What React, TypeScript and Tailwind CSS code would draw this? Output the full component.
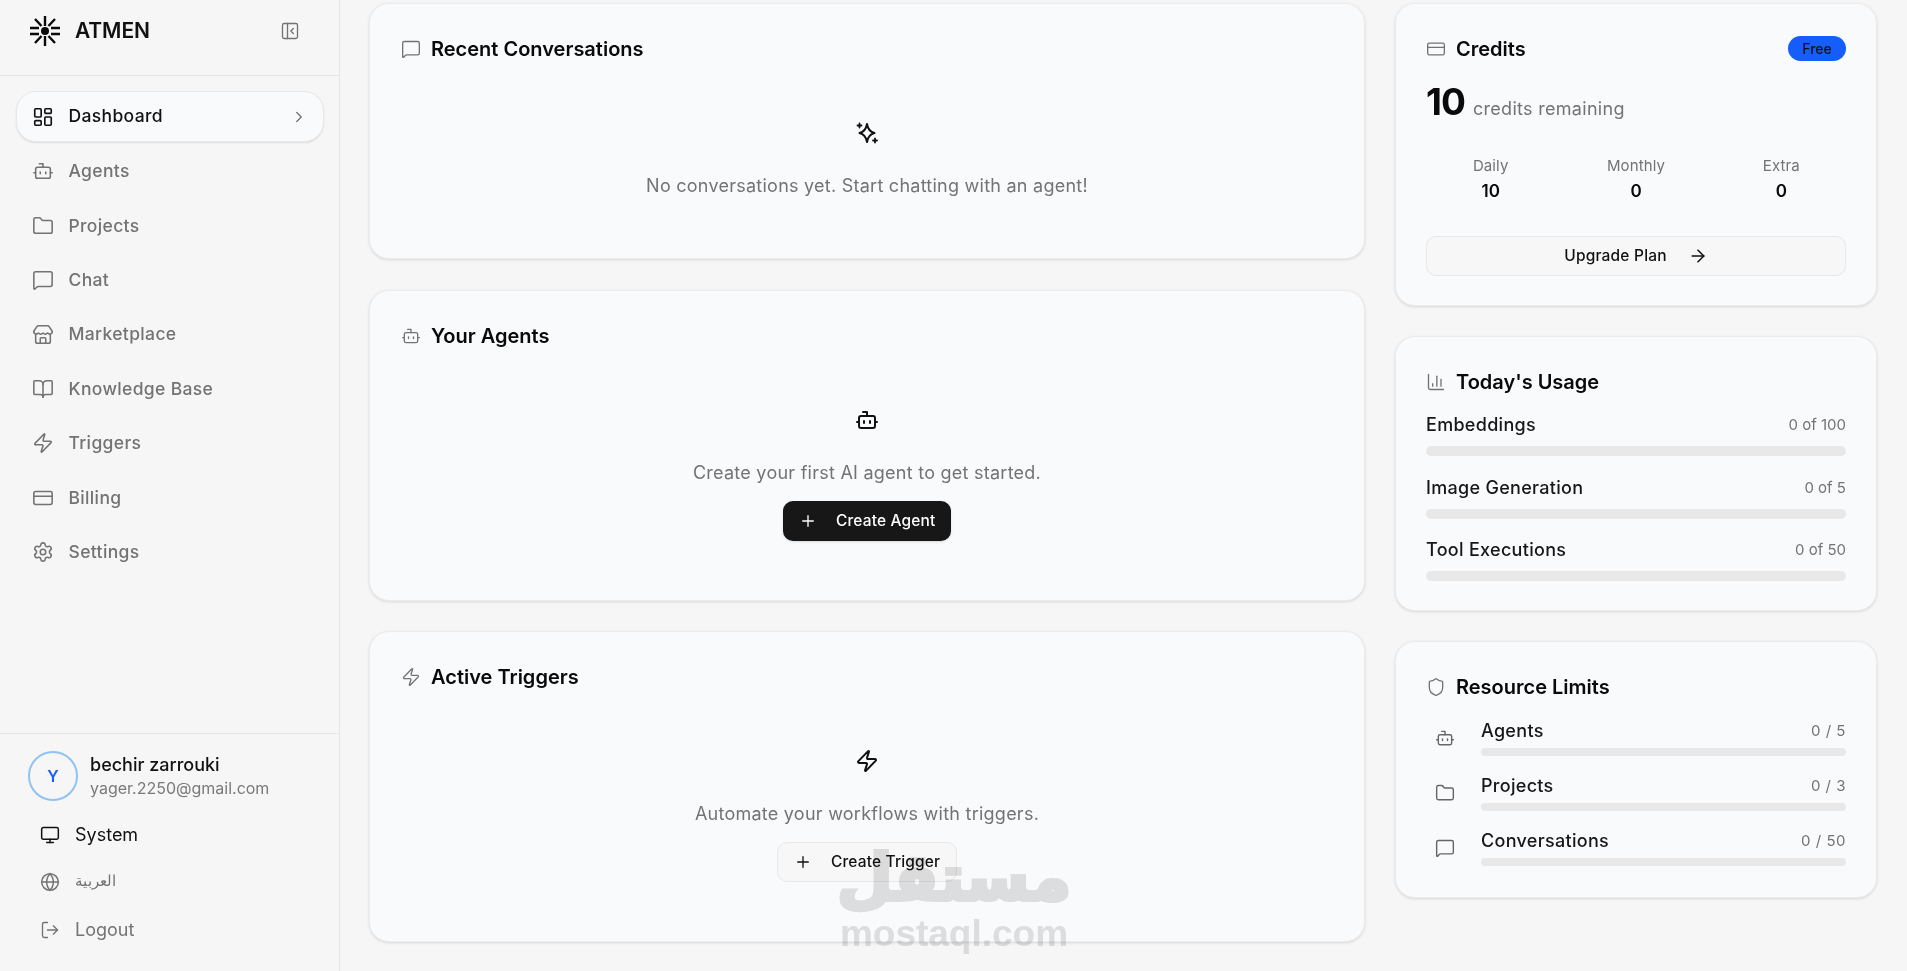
import { ArrowRight, BookOpen, Bot, ChartColumn, ChevronRight, CreditCard, Folder, Globe, LayoutDashboard, LogOut, MessageSquare, Monitor, PanelLeftClose, Plus, Settings, Shield, Store, Zap } from "lucide-react";
import type { ReactNode } from "react";

const nav = [
  { label: "Agents", icon: Bot },
  { label: "Projects", icon: Folder },
  { label: "Chat", icon: MessageSquare },
  { label: "Marketplace", icon: Store },
  { label: "Knowledge Base", icon: BookOpen },
  { label: "Triggers", icon: Zap },
  { label: "Billing", icon: CreditCard },
  { label: "Settings", icon: Settings },
];

function Logo() {
  return (
    <svg width="30" height="30" viewBox="0 0 30 30" className="text-[#0b0b0b]" fill="none" stroke="currentColor" strokeWidth="2.4">
      <circle cx="15" cy="15" r="4" fill="currentColor" stroke="none" />
      <path d="M0 12h9M21 12h9M0 18h9M21 18h9" strokeWidth="2.600" />
      <path d="M15 0v10M15 20v10" />
      <path d="M5 3l6.500 7M25 3l-6.500 7M5 27l6.500-7M25 27l-6.500-7" />
    </svg>
  );
}

function Spark() {
  return (
    <svg width="24" height="24" viewBox="0 0 24 24" fill="none" stroke="currentColor" strokeWidth="2" strokeLinejoin="round" strokeLinecap="round">
      <path d="M12 3C12.800 7.800 14.500 10.800 19.500 12C14.500 13.200 12.800 16.200 12 21C11.200 16.200 9.500 13.200 4.500 12C9.500 10.800 11.200 7.800 12 3Z" />
      <path d="M4.500 2.500v4M2.500 4.500h4M20 17.500v4M18 19.500h4" strokeWidth="1.800" />
    </svg>
  );
}

function Card({ className, children }: { className: string; children: ReactNode }) {
  return <section className={`rounded-[20px] border border-[#ececec] bg-[#f9fafc] shadow-[0_1px_3px_rgba(0,0,0,0.12)] ${className}`}>{children}</section>;
}

function Heading({ icon: Icon, children }: { icon: typeof Bot; children: ReactNode }) {
  return (
    <h2 className="flex items-center gap-[10px] text-[20px] leading-7 font-semibold text-[#0a0a0a]">
      <Icon className="size-[20px] text-[#737373]" strokeWidth={1.6} />
      {children}
    </h2>
  );
}

function Meter({ label, value }: { label: string; value: string }) {
  return (
    <div>
      <div className="flex items-center justify-between">
        <span className="text-[18px] leading-6 font-medium tracking-[0.3px] text-[#171717]">{label}</span>
        <span className="text-[15px] leading-6 text-[#737373]">{value}</span>
      </div>
      <div className="mt-[9px] h-[10px] rounded-full bg-[#e8e8e8]" />
    </div>
  );
}

function Limit({ icon: Icon, label, value }: { icon: typeof Bot; label: string; value: string }) {
  return (
    <div className="flex items-center">
      <div className="flex w-[55px] shrink-0 justify-start pl-[9px]">
        <Icon className="size-[20px] text-[#666]" strokeWidth={1.7} />
      </div>
      <div className="flex-1">
        <div className="flex items-center justify-between">
          <span className="text-[18px] leading-6 font-medium tracking-[0.3px] text-[#171717]">{label}</span>
          <span className="text-[15px] leading-6 tracking-[0.5px] text-[#737373]">{value}</span>
        </div>
        <div className="mt-[5px] h-2 rounded-full bg-[#e8e8e8]" />
      </div>
    </div>
  );
}

export default function App() {
  return (
    <div className="relative flex h-[971px] overflow-hidden bg-[#f6f6f6] font-['Inter','Noto_Sans',sans-serif] text-[#0a0a0a]">
      <aside className="flex w-[340px] shrink-0 flex-col border-r border-[#e5e5e5]">
        <div className="flex h-[76px] items-center justify-between border-b border-[#e5e5e5] pr-[39px] pb-[14px] pl-[30px]">
          <div className="flex items-center gap-[15px]">
            <Logo />
            <span className="text-[21px] font-semibold tracking-[-0.1px] text-[#111]">ATMEN</span>
          </div>
          <PanelLeftClose className="size-[20px] text-[#737373]" strokeWidth={1.6} />
        </div>

        <nav className="flex flex-1 flex-col gap-[4.400px] px-[15.500px] pt-[15px]">
          <div className="flex h-[51px] items-center gap-[15px] rounded-[20px] border border-[#e9e9e9] bg-[#f9fafc] pr-[15px] pl-[15px] text-[17.500px] font-medium tracking-[0.35px] text-[#111] shadow-[0_1px_2px_rgba(0,0,0,0.1)]">
            <LayoutDashboard className="size-[22px]" strokeWidth={1.8} />
            <span className="flex-1">Dashboard</span>
            <ChevronRight className="size-[18px] text-[#737373]" strokeWidth={1.8} />
          </div>
          {nav.map((item) => (
            <div key={item.label} className="flex h-[50px] items-center gap-[15px] pl-[16px] text-[17.500px] font-medium tracking-[0.35px] text-[#737373]">
              <item.icon className="size-[22px]" strokeWidth={1.7} />
              {item.label}
            </div>
          ))}
        </nav>

        <div className="h-[238px] border-t border-[#e5e5e5] pt-[17px]">
          <div className="flex items-center gap-[12px] pl-[28px]">
            <div className="flex size-[50px] items-center justify-center rounded-full border-2 border-[#90c2f4] text-[16px] font-semibold text-[#155dfc]">Y</div>
            <div>
              <p className="text-[18px] leading-[24px] font-medium text-[#111]">bechir zarrouki</p>
              <p className="text-[16px] leading-[22px] text-[#7a7a7a]">yager.2250@gmail.com</p>
            </div>
          </div>
          <div className="mt-[12px] flex flex-col gap-[4.500px] pl-[40px]">
            <div className="flex h-[43px] items-center gap-[15px] text-[18px] text-[#111]">
              <Monitor className="size-[20px]" strokeWidth={1.8} />
              System
            </div>
            <div className="flex h-[43px] items-center gap-[15px] font-['Liberation_Sans',sans-serif] text-[14.500px] text-[#737373]">
              <Globe className="size-[20px]" strokeWidth={1.8} />
              العربية
            </div>
            <div className="flex h-[43px] items-center gap-[15px] text-[18px] text-[#737373]">
              <LogOut className="size-[20px]" strokeWidth={1.6} />
              Logout
            </div>
          </div>
        </div>
      </aside>

      <main className="ml-[29px] flex w-[996px] shrink-0 flex-col gap-[30.500px] pt-[3px]">
        <Card className="h-[256px] px-[31px] pt-[31px]">
          <Heading icon={MessageSquare}>Recent Conversations</Heading>
          <div className="mt-[58px] flex flex-col items-center">
            <div className="text-[#111]"><Spark /></div>
            <p className="mt-[27px] text-[18px] leading-7 tracking-[0.25px] text-[#737373]">No conversations yet. Start chatting with an agent!</p>
          </div>
        </Card>
        <Card className="h-[311px] px-[31px] pt-[31px]">
          <Heading icon={Bot}>Your Agents</Heading>
          <div className="mt-[58px] flex flex-col items-center">
            <Bot className="size-[24px] text-[#111]" strokeWidth={2} />
            <p className="mt-[27px] text-[18px] leading-7 tracking-[0.25px] text-[#737373]">Create your first AI agent to get started.</p>
            <button className="mt-[14px] flex h-[40px] w-[168px] items-center gap-[19px] rounded-[10px] bg-[#171717] pl-[16px] text-[15.500px] font-medium tracking-[0.15px] text-white shadow-sm">
              <Plus className="size-[18px]" strokeWidth={1.8} />
              Create Agent
            </button>
          </div>
        </Card>
        <Card className="h-[311px] px-[31px] pt-[31px]">
          <Heading icon={Zap}>Active Triggers</Heading>
          <div className="mt-[58px] flex flex-col items-center">
            <Zap className="size-[24px] text-[#111]" strokeWidth={2} />
            <p className="mt-[27px] text-[18px] leading-7 tracking-[0.25px] text-[#737373]">Automate your workflows with triggers.</p>
            <button className="mt-[14px] flex h-[40px] w-[180px] items-center gap-[19px] rounded-[10px] border border-[#e8e8e8] bg-[#f7f7f7] pl-[16px] text-[15.500px] font-medium tracking-[0.15px] text-[#111]">
              <Plus className="size-[18px]" strokeWidth={1.8} />
              Create Trigger
            </button>
          </div>
        </Card>
      </main>

      <div className="ml-[30px] flex w-[482px] shrink-0 flex-col gap-[30px] pt-[3px]">
        <Card className="h-[303px] px-[30px] pt-[31px]">
          <div className="flex items-center justify-between">
            <Heading icon={CreditCard}>Credits</Heading>
            <span className="flex h-[25px] w-[58px] -translate-y-px items-center justify-center rounded-full bg-[#155dfc] text-[14px] font-medium text-[#111]">Free</span>
          </div>
          <div className="mt-[15px] flex items-baseline gap-[8px]">
            <span className="text-[37px] leading-[48px] font-bold tracking-[-1px]">10</span>
            <span className="text-[18px] tracking-[0.3px] text-[#737373]">credits remaining</span>
          </div>
          <div className="-mx-[8px] mt-[30px] grid grid-cols-3 text-center">
            <div><p className="text-[15px] leading-5 tracking-[0.1px] text-[#737373]">Daily</p><p className="mt-[3px] text-[17px] leading-6 font-semibold">10</p></div>
            <div><p className="text-[15px] leading-5 tracking-[0.1px] text-[#737373]">Monthly</p><p className="mt-[3px] text-[17px] leading-6 font-semibold">0</p></div>
            <div><p className="text-[15px] leading-5 tracking-[0.1px] text-[#737373]">Extra</p><p className="mt-[3px] text-[17px] leading-6 font-semibold">0</p></div>
          </div>
          <button className="mt-[33px] flex h-[40px] w-full items-center justify-center gap-[21px] rounded-[10px] border border-[#e8e8e8] bg-[#f7f7f7] text-[15.500px] font-medium tracking-[0.2px] text-[#111]">
            Upgrade Plan
            <ArrowRight className="size-[20px]" strokeWidth={1.8} />
          </button>
        </Card>
        <Card className="h-[275px] px-[30px] pt-[31px]">
          <Heading icon={ChartColumn}>Today's Usage</Heading>
          <div className="mt-[17px] flex flex-col gap-[19.500px]">
            <Meter label="Embeddings" value="0 of 100" />
            <Meter label="Image Generation" value="0 of 5" />
            <Meter label="Tool Executions" value="0 of 50" />
          </div>
        </Card>
        <Card className="h-[257px] px-[30px] pt-[31px]">
          <Heading icon={Shield}>Resource Limits</Heading>
          <div className="mt-[18px] flex flex-col gap-[18px]">
            <Limit icon={Bot} label="Agents" value="0 / 5" />
            <Limit icon={Folder} label="Projects" value="0 / 3" />
            <Limit icon={MessageSquare} label="Conversations" value="0 / 50" />
          </div>
        </Card>
      </div>

      {/* mostaql watermark */}
      <div className="pointer-events-none absolute top-[842px] left-[838px] flex w-[232px] flex-col items-center text-[#e2e2e2] mix-blend-multiply">
        <span className="font-['DejaVu_Sans',sans-serif] text-[64px] leading-[72px] font-bold [-webkit-text-stroke:4px_#e2e2e2]">مستقل</span>
        <span className="font-['Liberation_Sans',sans-serif] text-[37px] leading-[40px] font-bold">mostaql.com</span>
      </div>
    </div>
  );
}
